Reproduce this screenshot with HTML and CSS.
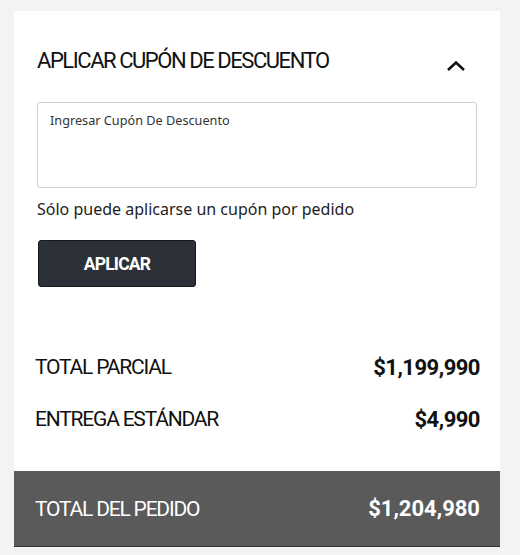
FILE: index.html
```html
<!DOCTYPE html>
<html lang="es">
<head>
<meta charset="utf-8">
<link rel="stylesheet" href="styles.css">
</head>
<body>
<div class="card">
  <div class="coupon">
    <div class="coupon-head">
      <span class="coupon-title">APLICAR CUPÓN DE DESCUENTO</span>
      <svg class="chevron" width="20" height="12" viewBox="0 0 20 12"><path d="M2 10 L10 2.5 L18 10" fill="none" stroke="#111" stroke-width="2.6"/></svg>
    </div>
    <div class="coupon-input"><span class="placeholder">Ingresar Cupón De Descuento</span></div>
    <p class="note">Sólo puede aplicarse un cupón por pedido</p>
    <button class="apply">APLICAR</button>
  </div>
  <div class="summary">
    <div class="row"><span class="label">TOTAL PARCIAL</span><span class="value">$1,199,990</span></div>
    <div class="row"><span class="label">ENTREGA ESTÁNDAR</span><span class="value">$4,990</span></div>
  </div>
  <div class="total">
    <span class="label">TOTAL DEL PEDIDO</span><span class="value value-total">$1,204,980</span>
  </div>
</div>
</body>
</html>
```
FILE: styles.css
```css
html, body {
  margin: 0;
  padding: 0;
  background: #f3f3f3;
}
body {
  padding: 11px 20px 0 14px;
  font-family: Roboto, "Liberation Sans", sans-serif;
  color: #111;
}
.card {
  width: 486px;
  background: #fff;
}
.coupon {
  padding: 38px 23px 0 23px;
}
.coupon-head {
  display: flex;
  justify-content: space-between;
  align-items: flex-start;
}
.coupon-title {
  font-size: 22px;
  line-height: 24px;
  letter-spacing: -1.45px;
  color: #111;
}
.chevron {
  margin: 11px 11px 0 0;
}
.coupon-input {
  margin-top: 29px;
  height: 84px;
  border: 1px solid #cfcfcf;
  border-radius: 3px;
  padding: 0 12px;
}
.placeholder {
  display: block;
  margin-top: 9px;
  font-family: "Noto Sans", sans-serif;
  font-size: 12.7px;
  line-height: 16px;
  color: #333;
}
.note {
  margin: 10px 0 0 0;
  font-family: "Noto Sans", sans-serif;
  font-size: 16px;
  line-height: 22px;
  color: #222;
}
.apply {
  display: block;
  margin: 20px 0 0 1px;
  width: 158px;
  height: 47px;
  background: #2c3038;
  border: 1px solid #15181d;
  border-radius: 3px;
  color: #fff;
  font-family: Roboto, "Liberation Sans", sans-serif;
  font-weight: 700;
  font-size: 17.5px;
  letter-spacing: -0.8px;
  padding: 0;
}
.summary {
  padding: 54px 20px 26px 21px;
}
.row {
  display: flex;
  justify-content: space-between;
  align-items: center;
  height: 52px;
}
.label {
  font-size: 21px;
  letter-spacing: -1.2px;
}
.value {
  font-size: 22px;
  font-weight: 700;
  letter-spacing: -0.5px;
}
.value-total {
  letter-spacing: 0;
}
.total {
  display: flex;
  justify-content: space-between;
  align-items: center;
  height: 75px;
  padding: 0 20px 0 21px;
  background: #5a5a5a;
  border-bottom: 1px solid #333;
  color: #fff;
}
```
